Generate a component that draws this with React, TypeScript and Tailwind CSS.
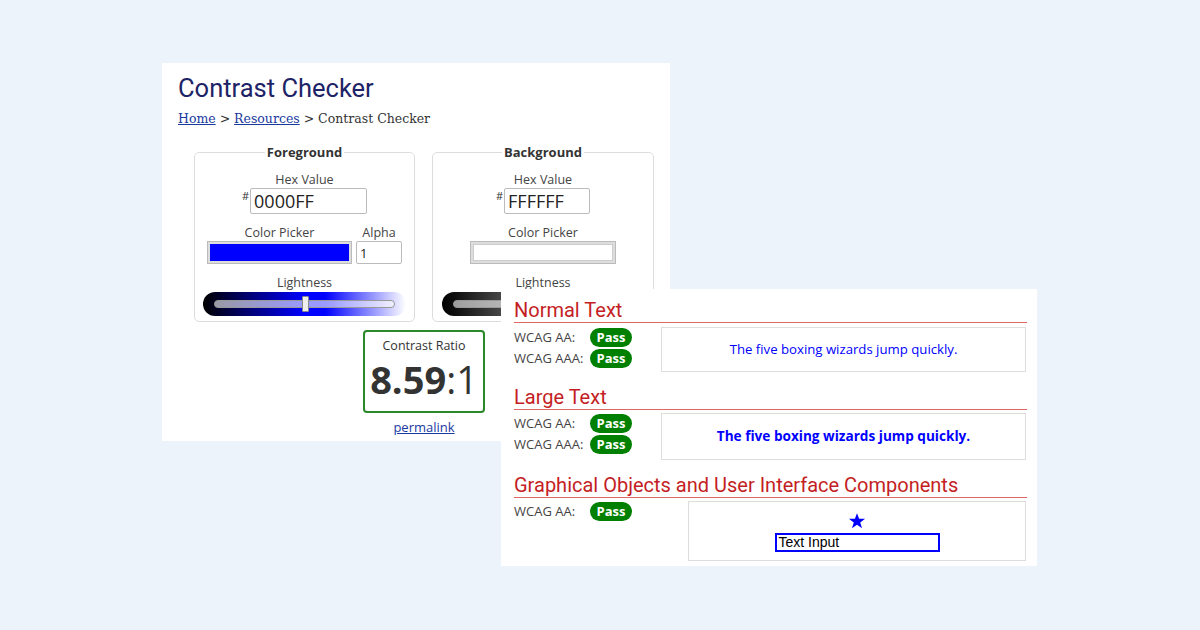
import React from 'react';

const Pass = () => (
  <span className="w-[42px] h-[19px] rounded-full bg-[#008000] text-white font-bold text-[13px] leading-[19px] text-center">
    Pass
  </span>
);

const WcagRow = ({ label }: { label: string }) => (
  <div className="flex items-center h-[21px]">
    <span className="w-[76px] text-[13px] text-[#444]">{label}</span>
    <Pass />
  </div>
);

const Heading = ({ children, className = '' }: { children: React.ReactNode; className?: string }) => (
  <h2
    className={`text-[20px] leading-[24px] font-['Roboto',sans-serif] text-[#c41e24] border-b border-[#e06666] ${className}`}
  >
    {children}
  </h2>
);

const LightnessSlider = ({ gradient, thumb }: { gradient: string; thumb: string }) => (
  <div className={`mt-[1px] w-[203px] h-[24px] rounded-full px-[11px] flex items-center ${gradient}`}>
    <div className="relative flex-1 h-[8px] rounded-full bg-white/60 border border-[#999]">
      <div className={`absolute top-[-5px] w-[7px] h-[16px] bg-[#eee] border border-[#888] rounded-[1px] ${thumb}`} />
    </div>
  </div>
);

function CheckerPanel() {
  return (
    <div className="absolute left-[162px] top-[63px] w-[508px] h-[378px] bg-white pl-[16px] pt-[9px]">
      <h1 className="text-[25.5px] leading-[32px] font-['Roboto',sans-serif] text-[#1d2366]">Contrast Checker</h1>
      <p className="mt-[5px] text-[12.5px] leading-[20px] font-['DejaVu_Serif',serif] text-[#333]">
        <a className="underline text-[#1a3aa0]">Home</a> &gt; <a className="underline text-[#1a3aa0]">Resources</a> &gt;
        Contrast Checker
      </p>

      <div className="ml-[16px] mt-[14px] w-[460px]">
        <div className="flex gap-[17px]">
          {/* Foreground */}
          <fieldset className="w-[221px] h-[179px] border border-[#ddd] rounded-[5px] flex flex-col items-center">
            <legend className="mx-auto px-[2px] text-[13px] leading-[18px] font-bold text-[#333]">Foreground</legend>
            <div className="flex flex-col items-center">
              <span className="mt-[10px] text-[12.5px] leading-[17px] text-[#444]">Hex Value</span>
              <div className="flex items-start">
                <span className="text-[11px] leading-[12px] mt-[2px] mr-[1px] text-[#333]">#</span>
                <input
                  readOnly
                  value="0000FF"
                  className="w-[117px] h-[26px] border border-[#bbb] rounded-[2px] px-[3px] text-[18px] text-[#222] outline-none"
                />
              </div>
              <div className="mt-[10px] flex gap-[4px]">
                <div className="flex flex-col items-center">
                  <span className="text-[12.5px] leading-[17px] text-[#444]">Color Picker</span>
                  <div className="w-[145px] h-[23px] border border-[#bbb] bg-[#ddd] p-[2px]">
                    <div className="w-full h-full bg-[#0000ff]" />
                  </div>
                </div>
                <div className="flex flex-col items-center">
                  <span className="text-[12.5px] leading-[17px] text-[#444]">Alpha</span>
                  <input
                    readOnly
                    value="1"
                    className="w-[46px] h-[23px] border border-[#bbb] rounded-[2px] px-[3px] text-[13px] text-[#222] outline-none"
                  />
                </div>
              </div>
              <span className="mt-[11px] text-[12.5px] leading-[16px] text-[#444]">Lightness</span>
              <LightnessSlider
                gradient="bg-[linear-gradient(to_right,#000_0%,#0000ff_50%,#0000ff_60%,#fff_100%)]"
                thumb="left-[87px]"
              />
            </div>
          </fieldset>

          {/* Background */}
          <fieldset className="w-[222px] h-[179px] border border-[#ddd] rounded-[5px] flex flex-col items-center">
            <legend className="mx-auto px-[2px] text-[13px] leading-[18px] font-bold text-[#333]">Background</legend>
            <div className="flex flex-col items-center">
              <span className="mt-[10px] text-[12.5px] leading-[17px] text-[#444]">Hex Value</span>
              <div className="flex items-start">
                <span className="text-[11px] leading-[12px] mt-[2px] mr-[1px] text-[#333]">#</span>
                <input
                  readOnly
                  value="FFFFFF"
                  className="w-[86px] h-[26px] border border-[#bbb] rounded-[2px] px-[3px] text-[18px] text-[#222] outline-none"
                />
              </div>
              <div className="mt-[10px] flex flex-col items-center">
                <span className="text-[12.5px] leading-[17px] text-[#444]">Color Picker</span>
                <div className="w-[146px] h-[23px] border border-[#bbb] bg-[#ddd] p-[2px]">
                  <div className="w-full h-full bg-white border border-[#ccc]" />
                </div>
              </div>
              <span className="mt-[11px] text-[12.5px] leading-[16px] text-[#444]">Lightness</span>
              <LightnessSlider gradient="bg-[linear-gradient(to_right,#000_0%,#555_35%,#fff_100%)]" thumb="right-[-2px]" />
            </div>
          </fieldset>
        </div>

        <div className="mx-auto mt-[8px] w-[122px] h-[83px] border-2 border-[#2a8a2a] rounded-[4px] flex flex-col items-center text-[#333]">
          <span className="mt-[5px] text-[12.5px] leading-[17px]">Contrast Ratio</span>
          <span className="mt-[2px] text-[38px] leading-[46px]">
            <b>8.59</b>:1
          </span>
        </div>
        <p className="mt-[4px] text-center text-[13px] leading-[20px]">
          <a className="underline text-[#1a3aa0]">permalink</a>
        </p>
      </div>
    </div>
  );
}

function ResultsPanel() {
  return (
    <div className="absolute left-[501px] top-[289px] w-[536px] h-[277px] bg-white pl-[13px] pr-[10px] pt-[9px]">
      <Heading>Normal Text</Heading>
      <div className="mt-[4px] flex">
        <div className="w-[147px]">
          <WcagRow label="WCAG AA:" />
          <WcagRow label="WCAG AAA:" />
        </div>
        <div className="flex-1 mr-[1px] h-[45px] border border-[#ddd] flex items-center justify-center text-[13.2px] text-[#0000ff]">
          The five boxing wizards jump quickly.
        </div>
      </div>

      <Heading className="mt-[13px]">Large Text</Heading>
      <div className="mt-[3px] flex">
        <div className="w-[147px]">
          <WcagRow label="WCAG AA:" />
          <WcagRow label="WCAG AAA:" />
        </div>
        <div className="flex-1 mr-[1px] h-[47px] border border-[#ddd] flex items-center justify-center text-[13.6px] font-bold text-[#0000ff]">
          The five boxing wizards jump quickly.
        </div>
      </div>

      <Heading className="mt-[13px]">Graphical Objects and User Interface Components</Heading>
      <div className="mt-[3px] flex">
        <div className="w-[174px]">
          <WcagRow label="WCAG AA:" />
        </div>
        <div className="flex-1 mr-[1px] h-[60px] border border-[#ddd] flex flex-col items-center">
          <svg className="mt-[10px]" width="18" height="18" viewBox="0 0 24 24">
            <polygon fill="#0000ff" points="12,1.5 14.8,9 22.8,9 16.3,13.9 18.7,21.8 12,17 5.3,21.8 7.7,13.9 1.2,9 9.2,9" />
          </svg>
          <div className="mt-[3px] w-[165px] h-[19px] border-2 border-[#0000ff] px-[2px] text-[14px] leading-[15px] font-['Liberation_Sans',sans-serif] text-black">
            Text Input
          </div>
        </div>
      </div>
    </div>
  );
}

export default function App() {
  return (
    <div className="relative w-[1200px] h-[630px] bg-[#edf3fb] overflow-hidden font-['Open_Sans',sans-serif]">
      <CheckerPanel />
      <ResultsPanel />
    </div>
  );
}
